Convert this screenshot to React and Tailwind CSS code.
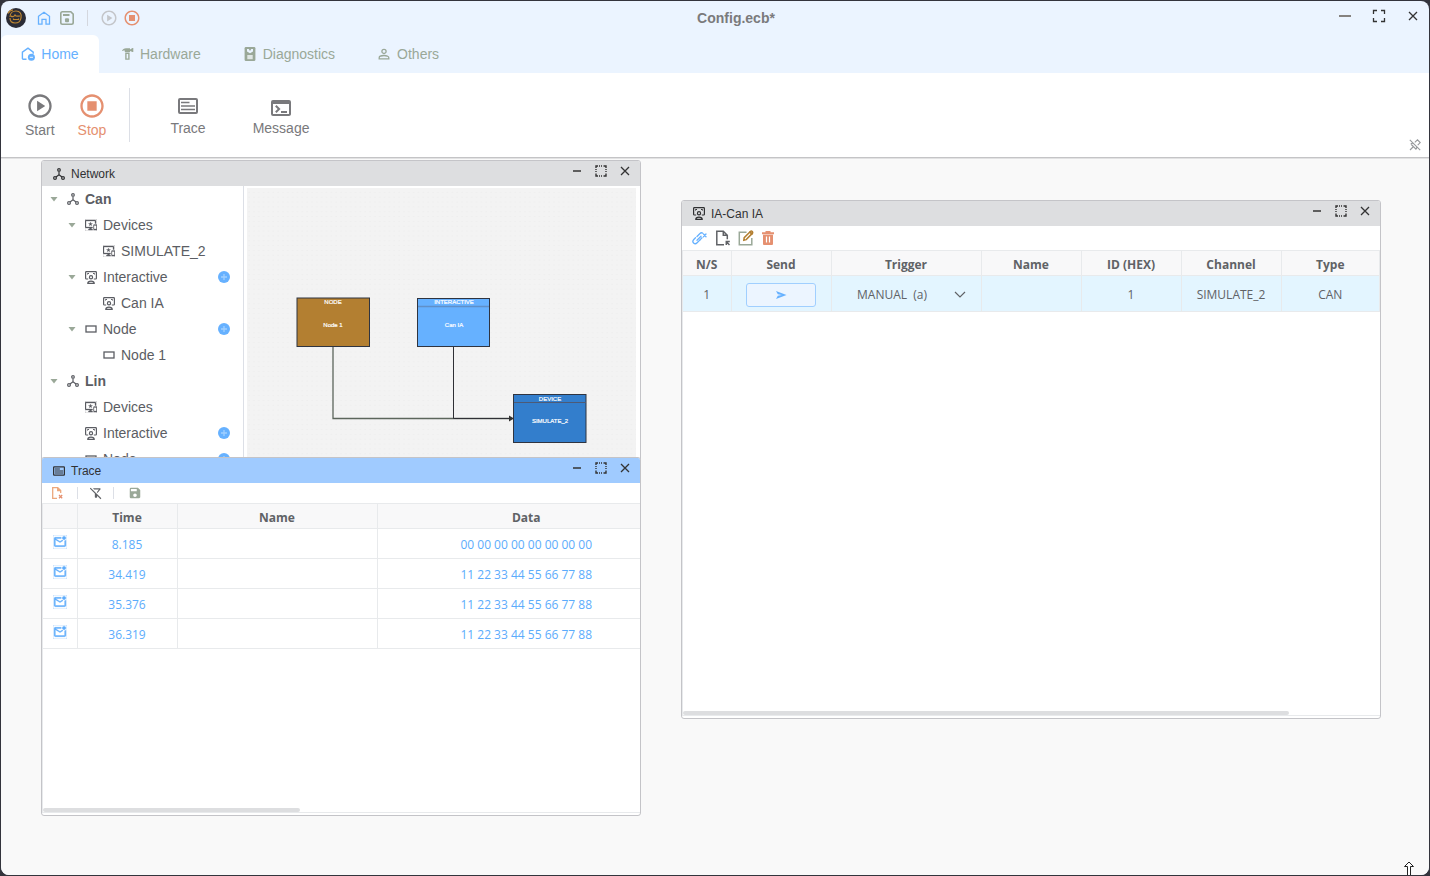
import {
  MdImportantDevices,
  MdOutlineFilterAltOff,
  MdOutlineMarkEmailUnread,
  MdOutlinePlayCircle,
  MdOutlineStopCircle,
  MdOutlineTerminal,
  MdSave,
} from "react-icons/md";

const traceRows = [
  { time: "8.185", name: "", data: "00 00 00 00 00 00 00 00" },
  { time: "34.419", name: "", data: "11 22 33 44 55 66 77 88" },
  { time: "35.376", name: "", data: "11 22 33 44 55 66 77 88" },
  { time: "36.319", name: "", data: "11 22 33 44 55 66 77 88" },
];

const treeRows = [
  { label: "Can", level: 0, icon: "network", open: true },
  { label: "Devices", level: 1, icon: "device", open: true },
  { label: "SIMULATE_2", level: 2, icon: "device" },
  { label: "Interactive", level: 1, icon: "interactive", open: true, add: true },
  { label: "Can IA", level: 2, icon: "interactive" },
  { label: "Node", level: 1, icon: "node", open: true, add: true },
  { label: "Node 1", level: 2, icon: "node" },
  { label: "Lin", level: 0, icon: "network", open: true },
  { label: "Devices", level: 1, icon: "device" },
  { label: "Interactive", level: 1, icon: "interactive", add: true },
  { label: "Node", level: 1, icon: "node", add: true },
];

const indents = ["pl-1.5", "pl-6", "pl-[42px]"];

function Logo() {
  return (
    <svg viewBox="0 0 20 20" className="size-5">
      <circle cx="10" cy="10" r="10" fill="#2b2c36" />
      <g fill="none" stroke="#c08832" strokeWidth="1.200">
        <path d="M4 9C4 5 7 3 10 3c4 0 6 3 5 7-.5 3-3 5-6 5-3 0-5-2-5-5" />
        <path d="M2 5.500C3 3.500 5 2 7 1.800M5 8c1 1 3 1 4-1 1 2 3 1 5 1" />
        <path d="M7.500 10.500v1h5v-1" />
      </g>
    </svg>
  );
}

function HouseIcon({ className }) {
  return (
    <svg viewBox="0 0 14 14" className={className} fill="none" stroke="currentColor" strokeWidth="1.300">
      <path d="M1.500 5.300L7 1.200l5.500 4.100v7.900H9V8.300H5v4.900H1.500z" />
    </svg>
  );
}

function HomeMinusIcon() {
  return (
    <svg viewBox="0 0 14 14" className="size-3.5" fill="none">
      <path d="M5.500 12.300H2.200a.8.8 0 0 1-.8-.8V5.200L7 1.200l5.200 4v1.500" stroke="currentColor" strokeWidth="1.400" />
      <circle cx="10.400" cy="10.300" r="3.500" fill="currentColor" />
      <path d="M8.800 10.300H12" stroke="#fff" strokeWidth=".9" />
    </svg>
  );
}

function SaveIcon() {
  return (
    <svg viewBox="0 0 14 14" className="size-3.5" fill="none" stroke="currentColor" strokeWidth="1.600">
      <path d="M2.500.8h8.300l2.400 2.400v8.300c0 1-.7 1.700-1.700 1.700h-9c-1 0-1.700-.7-1.700-1.700v-9c0-1 .7-1.700 1.700-1.700z" />
      <path d="M3 4h6.500" strokeWidth="2.200" />
      <rect x="5" y="7.300" width="4" height="4" rx="1" fill="currentColor" stroke="none" />
    </svg>
  );
}

function HammerIcon() {
  return (
    <svg viewBox="0 0 13 14" className="h-3.5 w-[13px]" fill="currentColor">
      <path d="M.8 4.200C1.500 2.200 3.200 1.200 5 1.200h4v1.300l2.500-1.400h.8v4h-.8L9 3.900v1H3.800V3.600C2.800 3.200 1.800 3.500.8 4.200z" />
      <path d="M4.200 5.500h4.400v7.300H4.200zM5.600 7v4.500h1.600V7z" fillRule="evenodd" />
    </svg>
  );
}

function PersonIcon() {
  return (
    <svg viewBox="0 0 12 12" className="size-3" fill="none" stroke="currentColor" strokeWidth="1.300">
      <circle cx="6" cy="3.400" r="2.100" />
      <path d="M1.200 10.800V9.700C1.200 8.300 3.500 7.500 6 7.500s4.800.8 4.800 2.200v1.100z" />
    </svg>
  );
}

function GaugeIcon() {
  return (
    <svg viewBox="0 0 12 14" className="h-3.5 w-3" fill="currentColor">
      <rect x=".6" width="10.800" height="14" rx="1.300" />
      <path d="M3 2h6v2.500L6 6.200 3 4.500z" fill="#ebf4ff" />
      <path d="M4.800 2h2.400L6 4z" />
      <rect x="3.300" y="8" width="5.400" height="4.200" fill="#dfe6e4" />
    </svg>
  );
}

function TraceIcon({ className }) {
  return (
    <svg viewBox="0 0 20 16" className={className} fill="none" stroke="currentColor">
      <rect x="1" y="1" width="18" height="14" rx="1" strokeWidth="2" />
      <path d="M3 4.500h8.500M3 8h14M3 11.500h14" strokeWidth="1.700" />
    </svg>
  );
}

function NetworkIcon() {
  return (
    <svg viewBox="0 0 12 12" className="size-3" fill="none" stroke="currentColor" strokeWidth="1.200">
      <circle cx="6" cy="1.900" r="1.300" />
      <circle cx="2" cy="10" r="1.400" />
      <circle cx="10" cy="10" r="1.400" />
      <path d="M6 3.400v3.400M3 8.900l3-2.200 3 2.200" />
    </svg>
  );
}

function InteractiveIcon() {
  return (
    <svg viewBox="0 0 12 13" className="h-[13px] w-3" fill="none" stroke="currentColor" strokeWidth="1.200">
      <path d="M3.200 8H1.400c-.5 0-.8-.3-.8-.8V1.400c0-.5.3-.8.800-.8h9.200c.5 0 .8.3.8.800v5.800c0 .5-.3.800-.8.800H8.800" />
      <circle cx="6" cy="6.200" r="1.600" />
      <path d="M2.800 12.300c0-1.500 1.200-2.200 3.200-2.200s3.200.7 3.200 2.200z" />
      <path d="M2.500 3.500v-1H4M9.500 3.500v-1H8" strokeWidth="1" />
    </svg>
  );
}

function NodeIcon() {
  return (
    <svg viewBox="0 0 12 12" className="size-3" fill="none" stroke="currentColor" strokeWidth="1.300">
      <rect x="1" y="3" width="10" height="6" />
    </svg>
  );
}

function TreeIcon({ type }) {
  if (type === "network") return <NetworkIcon />;
  if (type === "interactive") return <InteractiveIcon />;
  if (type === "node") return <NodeIcon />;
  return <MdImportantDevices className="size-3" stroke="currentColor" strokeWidth="0.6" />;
}

function WindowButtons() {
  return (
    <div className="mb-1.5 flex items-center gap-3 pr-[9px] text-[#333]">
      <button type="button" aria-label="Minimize">
        <svg viewBox="0 0 12 12" className="size-3" stroke="currentColor" strokeWidth="1.500">
          <path d="M2 6h8" />
        </svg>
      </button>
      <button type="button" aria-label="Maximize">
        <svg viewBox="0 0 12 12" className="size-3" fill="none" stroke="currentColor">
          <path d="M1 3V1h2M9 1h2v2M11 9v2H9M3 11H1V9" strokeWidth="1.400" />
          <path d="M4 1h4.500M4 11h4.500M1 4v4.500M11 4v4.500" strokeWidth="1.400" strokeDasharray="1 1" />
        </svg>
      </button>
      <button type="button" aria-label="Close">
        <svg viewBox="0 0 12 12" className="size-3" stroke="currentColor" strokeWidth="1.300">
          <path d="M2 2l8 8M10 2l-8 8" />
        </svg>
      </button>
    </div>
  );
}

function Panel({ title, icon, className, headerClass, children }) {
  return (
    <section className={`absolute flex flex-col overflow-hidden rounded-[3px] border border-[#c4c4c8] bg-white ${className}`}>
      <header className={`flex h-[25px] shrink-0 items-center justify-between ${headerClass}`}>
        <h2 className="flex items-center gap-1.5 pl-[11px] text-xs text-[#303133]">
          {icon}
          {title}
        </h2>
        <WindowButtons />
      </header>
      {children}
    </section>
  );
}

function Tree() {
  return (
    <ul className="w-[202px] shrink-0 border-r border-[#dcdfe6] text-sm text-[#5b5d63]">
      {treeRows.map((row, i) => (
        <li key={i} className={`flex h-[26px] items-center pr-[13px] ${indents[row.level]}`}>
          <span className="flex w-[19px] shrink-0 pl-0.5">
            {row.open && (
              <svg viewBox="0 0 8 6" className="h-1.5 w-2 fill-[#9aa898]">
                <path d="M.5 1h7L4 5.500z" />
              </svg>
            )}
          </span>
          <TreeIcon type={row.icon} />
          <span className={row.level === 0 ? "ml-1.5 font-bold" : "ml-1.5"}>{row.label}</span>
          {row.add && (
            <button type="button" aria-label={`Add ${row.label}`} className="ml-auto text-[#66b1ff]">
              <svg viewBox="0 0 12 12" className="size-3">
                <circle cx="6" cy="6" r="6" fill="currentColor" />
                <path d="M6 3v6M3 6h6" stroke="#a0cfff" strokeWidth="1.300" />
              </svg>
            </button>
          )}
        </li>
      ))}
    </ul>
  );
}

function Diagram() {
  return (
    <svg width="389" height="290" className="ml-[3px] mt-0.5 shrink-0" fontFamily="Liberation Sans, sans-serif" fontSize="6" textAnchor="middle">
      <defs>
        <pattern id="dots" width="4.840" height="4.840" patternUnits="userSpaceOnUse">
          <rect x="1.500" y="4" width="1" height="1" fill="#e9e9e9" />
        </pattern>
      </defs>
      <rect width="389" height="290" fill="#f3f3f3" />
      <rect width="389" height="290" fill="url(#dots)" />

      <g fill="none" strokeWidth="1">
        <path d="M86 159v71.500H262" stroke="#5c665c" strokeWidth="1.300" />
        <path d="M206.500 159v71.500H262" stroke="#2f3035" />
      </g>
      <path d="M262 227.500l5 3-5 3z" fill="#333" />

      <g stroke="#2f3440">
        <rect x="50" y="110" width="72.500" height="48.500" fill="#b37f31" />
        <rect x="170.500" y="110.500" width="72" height="48" fill="#66b1ff" />
        <path d="M171 118.500h71" stroke="#6090c8" strokeWidth="1.500" />
        <rect x="266.500" y="206.500" width="72.500" height="48" fill="#337ecc" />
        <path d="M267 214.500h72" stroke="#4d5a75" />
      </g>
      <g fill="#fff" stroke="#fff" strokeWidth=".2">
        <text x="86" y="116">NODE</text>
        <text x="86" y="139">Node 1</text>
        <text x="207" y="116">INTERACTIVE</text>
        <text x="207" y="139">Can IA</text>
        <text x="303" y="213">DEVICE</text>
        <text x="303" y="235">SIMULATE_2</text>
      </g>
    </svg>
  );
}

function TraceTable() {
  return (
    <div className="mb-0.5 flex flex-1 flex-col overflow-hidden border-y border-l border-[#e8eaec]">
      <table className="w-[632px] table-fixed border-collapse text-center font-['Open_Sans',sans-serif] text-xs">
        <colgroup>
          <col className="w-[34px]" />
          <col className="w-[100px]" />
          <col className="w-[200px]" />
          <col className="w-[298px]" />
        </colgroup>
        <thead>
          <tr className="h-6 border-b border-[#e8eaec] bg-[#f8f8f9] text-[#606266]">
            <th className="border-r border-[#e8eaec]"></th>
            <th className="border-r border-[#e8eaec] pt-1 font-bold">Time</th>
            <th className="border-r border-[#e8eaec] pt-1 font-bold">Name</th>
            <th className="pt-1 font-bold">Data</th>
          </tr>
        </thead>
        <tbody>
          {traceRows.map((row) => (
            <tr key={row.time} className="h-[30px] border-b border-[#e8eaec] text-[#5cacfc]">
              <td className="border-r border-[#e8eaec]">
                <MdOutlineMarkEmailUnread className="mx-auto mb-0.5 size-3.5" stroke="currentColor" strokeWidth="0.6" />
              </td>
              <td className="border-r border-[#e8eaec] pt-1">{row.time}</td>
              <td className="border-r border-[#e8eaec] pt-1">{row.name}</td>
              <td className="pt-1">{row.data}</td>
            </tr>
          ))}
        </tbody>
      </table>
      <div className="mt-auto h-1 w-[43%] rounded-full bg-[#dddee0]" />
    </div>
  );
}

function InteractiveTable() {
  const cell = "border-r border-[#e8eaec] pt-1";
  return (
    <div className="mb-0.5 flex flex-1 flex-col overflow-hidden border-y border-l border-[#e8eaec]">
      <table className="w-full table-fixed border-collapse text-center font-['Open_Sans',sans-serif] text-xs text-[#606266]">
        <colgroup>
          <col className="w-[48px]" />
          <col className="w-[100px]" />
          <col className="w-[150px]" />
          <col className="w-[100px]" />
          <col className="w-[100px]" />
          <col className="w-[100px]" />
          <col />
        </colgroup>
        <thead>
          <tr className="h-6 border-b border-[#e8eaec] bg-[#f8f8f9]">
            {["N/S", "Send", "Trigger", "Name", "ID (HEX)", "Channel", "Type"].map((h) => (
              <th key={h} className={`${cell} font-bold`}>{h}</th>
            ))}
          </tr>
        </thead>
        <tbody>
          <tr className="h-9 border-b border-[#e8eaec] bg-[#e3f5ff]">
            <td className={cell}>1</td>
            <td className={cell}>
              <button
                type="button"
                aria-label="Send message"
                className="mx-auto flex h-6 w-[70px] items-center justify-center rounded-[3px] border border-[#a0cfff] bg-[#ecf5ff] text-[#66b1ff]"
              >
                <svg viewBox="0 0 12 12" className="size-3" fill="currentColor">
                  <path d="M1 2l10.500 4L1 10l1.800-3.300L7 6 2.800 5.300z" />
                </svg>
              </button>
            </td>
            <td className={cell}>
              <div className="relative">
                <select aria-label="Trigger" className="mr-7 w-[118px] appearance-none bg-transparent text-center outline-none [text-align-last:center]">
                  <option>MANUAL &nbsp;(a)</option>
                </select>
                <svg viewBox="0 0 12 12" className="pointer-events-none absolute right-[15px] top-0.5 size-3" fill="none" stroke="currentColor" strokeWidth="1.200">
                  <path d="M1 3l5 5 5-5" />
                </svg>
              </div>
            </td>
            <td className={cell}></td>
            <td className={cell}>1</td>
            <td className={cell}>SIMULATE_2</td>
            <td className={cell}>CAN</td>
          </tr>
        </tbody>
      </table>
      <div className="mt-auto h-1 w-[87%] rounded-full bg-[#dddee0]" />
    </div>
  );
}

function TitleBar() {
  return (
    <header className="grid h-[34px] grid-cols-[1fr_auto_1fr] items-center">
      <div className="flex items-center pl-[5px]">
        <Logo />
        <button type="button" aria-label="Home" className="ml-[11px] text-[#66b1ff]">
          <HouseIcon className="size-3.5" />
        </button>
        <button type="button" aria-label="Save" className="ml-[9px] text-[#9aa898]">
          <SaveIcon />
        </button>
        <span className="ml-[13px] h-4 w-px bg-[#d4d7de]" />
        <button type="button" aria-label="Start" className="ml-3 text-[#c4c6ca]">
          <MdOutlinePlayCircle className="size-[18px]" />
        </button>
        <button type="button" aria-label="Stop" className="ml-[5px] text-[#e59070]">
          <MdOutlineStopCircle className="size-[18px]" />
        </button>
      </div>
      <h1 className="pl-[42px] text-sm font-bold text-[#7a7a7c]">Config.ecb*</h1>
      <div className="flex items-center justify-end gap-5 pb-1 pr-[9px] text-[#333]">
        <button type="button" aria-label="Minimize">
          <svg viewBox="0 0 14 14" className="size-3.5" stroke="#85827f" strokeWidth="2">
            <path d="M1 7h12" />
          </svg>
        </button>
        <button type="button" aria-label="Maximize">
          <svg viewBox="0 0 14 14" className="size-3.5" fill="none" stroke="currentColor" strokeWidth="1.300">
            <path d="M1.500 5V1.500H5M9 1.500h3.500V5M12.500 9v3.500H9M5 12.500H1.500V9" />
          </svg>
        </button>
        <button type="button" aria-label="Close">
          <svg viewBox="0 0 14 14" className="size-3.5" stroke="currentColor" strokeWidth="1.300">
            <path d="M3 3l8 8M11 3l-8 8" />
          </svg>
        </button>
      </div>
    </header>
  );
}

function Tabs() {
  return (
    <nav className="flex h-[38px] text-sm text-[#9aa898]">
      <button type="button" className="flex w-[98px] items-center justify-center gap-1.5 rounded-t-md bg-white text-[#66b1ff]">
        <HomeMinusIcon />
        Home
      </button>
      <button type="button" className="ml-[22px] flex items-center gap-1.5">
        <HammerIcon />
        Hardware
      </button>
      <button type="button" className="ml-[43px] flex items-center gap-[7px]">
        <GaugeIcon />
        Diagnostics
      </button>
      <button type="button" className="ml-[43px] flex items-center gap-[7px]">
        <PersonIcon />
        Others
      </button>
    </nav>
  );
}

function Ribbon() {
  return (
    <div className="flex h-[85px] items-center border-b border-[#c4c4c6] bg-white text-sm text-[#79797c]">
      <button type="button" className="ml-6 flex flex-col items-center pt-0.5">
        <MdOutlinePlayCircle className="size-7" />
        <span>Start</span>
      </button>
      <button type="button" className="ml-[23px] flex flex-col items-center pt-0.5 text-[#e59070]">
        <MdOutlineStopCircle className="size-7" />
        <span>Stop</span>
      </button>
      <span className="ml-[23px] h-[54px] w-px bg-[#dcdfe6]" />
      <button type="button" className="ml-10 flex flex-col items-center gap-1 pt-1.5">
        <TraceIcon className="h-4 w-5" />
        <span>Trace</span>
      </button>
      <button type="button" className="ml-[47px] flex flex-col items-center pt-1.5">
        <MdOutlineTerminal className="-my-0.5 size-6" />
        <span>Message</span>
      </button>
      <button type="button" aria-label="Unpin" className="mb-1.5 ml-auto mr-2 self-end text-[#97999c]">
        <svg viewBox="0 0 12 12" className="size-3" fill="none" stroke="currentColor" strokeWidth="1.100">
          <path d="M.8.800l10.400 10.400M1 11l3.500-3.500M1.800 5l5.200 5.200c.8-.8.9-1.600.6-2.400M1.800 5c.8-.8 1.500-.8 2.300-.6M5.800 3.300L8.500.8l2.700 2.700-2.500 2.700" />
        </svg>
      </button>
    </div>
  );
}

function App() {
  return (
    <div className="flex min-h-screen bg-[#33343c] p-px font-['Liberation_Sans',Arial,sans-serif]">
      <div className="relative flex flex-1 flex-col overflow-hidden rounded-lg bg-[#ebf4ff]">
        <TitleBar />
        <Tabs />
        <Ribbon />

        <main className="relative flex-1 border-t border-[#e2e2e3] bg-[#f9f9f9]">
          <Panel title="Network" icon={<NetworkIcon />} className="left-10 top-px h-[350px] w-[600px]" headerClass="bg-[#dddee0]">
            <div className="flex flex-1 overflow-hidden">
              <Tree />
              <Diagram />
            </div>
          </Panel>

          <Panel title="Trace" icon={<TraceIcon className="size-3" />} className="left-10 top-[298px] h-[359px] w-[600px]" headerClass="bg-[#a0cbff]">
            <div className="flex h-5 shrink-0 items-center pl-[9px]">
              <button type="button" aria-label="Clear trace" className="text-[#e59070]">
                <svg viewBox="0 0 12 12" className="size-3" fill="none" stroke="currentColor" strokeWidth="1.300">
                  <path d="M6 11.400H1.700V.6h5l3 3V6M6.700.6v3h3" stroke="#eca77c" />
                  <path d="M8 8l3.200 3.200M11.200 8L8 11.200" />
                </svg>
              </button>
              <span className="ml-3.5 h-3 w-px bg-[#dcdfe6]" />
              <button type="button" aria-label="Filter off" className="ml-[11px] text-[#606266]">
                <MdOutlineFilterAltOff className="size-3.5" />
              </button>
              <span className="ml-2.5 h-3 w-px bg-[#dcdfe6]" />
              <button type="button" aria-label="Save trace" className="ml-3.5 text-[#9aa898]">
                <MdSave className="size-3.5" />
              </button>
            </div>
            <TraceTable />
          </Panel>

          <Panel title="IA-Can IA" icon={<InteractiveIcon />} className="left-[680px] top-[41px] h-[519px] w-[700px]" headerClass="bg-[#dddee0]">
            <div className="flex h-6 shrink-0 items-center gap-2 pl-2.5">
              <button type="button" aria-label="Unlink" className="text-[#66b1ff]">
                <svg viewBox="0 0 15 14" className="h-3.5 w-[15px]" fill="none" stroke="currentColor" strokeWidth="1.300" strokeLinecap="round">
                  <path d="M5 9.300l4-4" />
                  <path d="M5 5.500l3-3c.8-.8 1.800-.9 2.500-.4M3.500 6.800L1.800 8.500c-1.200 1.200-1 2.700-.2 3.500s2.300 1 3.500-.2l2.900-2.900" />
                  <path d="M10 6.800L8 8.900" />
                  <path d="M11.500 3l2.500 2.800M14 3l-2.500 2.800" />
                </svg>
              </button>
              <button type="button" aria-label="Import file" className="text-[#606266]">
                <svg viewBox="0 0 15 16" className="h-4 w-[15px]" fill="none" stroke="currentColor" strokeWidth="1.500">
                  <path d="M9 14.800H1.800V1.200h6.500l4 4v4M8.300 1.200v4h4" />
                  <path d="M11.300 15v-3.500h3.500M11.500 11.700l3 3.300" />
                </svg>
              </button>
              <button type="button" aria-label="Edit" className="text-[#9aa898]">
                <svg viewBox="0 0 16 16" className="size-4" fill="none" stroke="currentColor" strokeWidth="1.500">
                  <path d="M8.500 2.200H1.300v12.500h12.500V8" />
                  <path d="M5.800 10.300l.4-2.600 6.200-6.200c.6-.6 1.400-.5 1.900 0s.6 1.300 0 1.900L8.200 9.600z" stroke="#b37f31" />
                  <path d="M11.500 1.500l3 3" stroke="#b37f31" strokeWidth="2" />
                </svg>
              </button>
              <button type="button" aria-label="Delete" className="text-[#e59070]">
                <svg viewBox="0 0 12 14" className="h-3.5 w-3" fill="currentColor">
                  <path fillRule="evenodd" d="M3.500 0h5v1.300H12v2H0v-2h3.500zM1 3.800h10v8.900c0 .7-.5 1.300-1.200 1.300H2.200C1.500 14 1 13.400 1 12.700zM3.900 5.500v6h1.200v-6zm3 0v6h1.200v-6z" />
                </svg>
              </button>
            </div>
            <InteractiveTable />
          </Panel>
        </main>

        {/* resize pointer */}
        <svg viewBox="0 0 12 14" className="absolute bottom-0 right-3.5 h-3.5 w-3" fill="#fff" stroke="#222" strokeWidth="1">
          <path d="M4.500 15V5.500h-3L6 1l4.500 4.500h-3V15" />
        </svg>
      </div>
    </div>
  );
}

export default App;
